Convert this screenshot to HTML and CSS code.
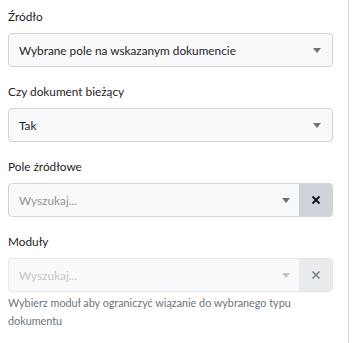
FILE: index.html
```html
<!DOCTYPE html>
<html lang="pl">
<head>
<meta charset="utf-8">
<link rel="stylesheet" href="styles.css">
</head>
<body>
<div class="panel">
  <div class="group">
    <div class="label">Źródło</div>
    <div class="select">
      <span class="value">Wybrane pole na wskazanym dokumencie</span>
      <span class="caret"></span>
    </div>
  </div>
  <div class="group">
    <div class="label">Czy dokument bieżący</div>
    <div class="select">
      <span class="value">Tak</span>
      <span class="caret"></span>
    </div>
  </div>
  <div class="group">
    <div class="label">Pole źródłowe</div>
    <div class="select with-clear">
      <span class="value placeholder">Wyszukaj...</span>
      <span class="caret"></span>
      <span class="clear">
        <svg width="10" height="10" viewBox="0 0 10 10"><path d="M1.5 1.5 L8.5 8.5 M8.5 1.5 L1.5 8.5" stroke="#111" stroke-width="1.8" fill="none"/></svg>
      </span>
    </div>
  </div>
  <div class="group">
    <div class="label">Moduły</div>
    <div class="select with-clear disabled">
      <span class="value placeholder">Wyszukaj...</span>
      <span class="caret"></span>
      <span class="clear">
        <svg width="10" height="10" viewBox="0 0 10 10"><path d="M1.5 1.5 L8.5 8.5 M8.5 1.5 L1.5 8.5" stroke="#7a8089" stroke-width="1.6" fill="none"/></svg>
      </span>
    </div>
    <div class="help">Wybierz moduł aby ograniczyć wiązanie do wybranego typu dokumentu</div>
  </div>
</div>
</body>
</html>
```

FILE: styles.css
```css
html, body {
  margin: 0;
  padding: 0;
  background: #fff;
}
body {
  font-family: "Lato", "Open Sans", sans-serif;
  color: #212529;
}
.panel {
  width: 325px;
  height: 336px;
  padding: 7px 15px 0 8px;
  border-right: 1px solid #d0d3d8;
}
.group {
  margin-bottom: 15px;
}
.label {
  font-size: 11.8px;
  line-height: 20px;
  margin-bottom: 6px;
  color: #1f2328;
}
.select {
  height: 32px;
  border: 1px solid #ced4da;
  border-radius: 4px;
  background: #f8f9fa;
  display: flex;
  align-items: center;
  padding-left: 10px;
  overflow: hidden;
}
.value {
  flex: 1;
  font-size: 11.8px;
  color: #1f2328;
}
.value.placeholder {
  color: #8e949a;
}
.caret {
  width: 0;
  height: 0;
  border-left: 4.5px solid transparent;
  border-right: 4.5px solid transparent;
  border-top: 5px solid #6c737a;
  margin-right: 11px;
}
.with-clear .caret {
  margin-right: 9px;
}
.clear {
  width: 33px;
  align-self: stretch;
  background: #ced2d9;
  display: flex;
  align-items: center;
  justify-content: center;
}
.disabled {
  background: #f8f9fa;
  border-color: #e4e7ea;
}
.disabled .value.placeholder {
  color: #c3c7cb;
}
.disabled .caret {
  border-top-color: #c3c7cb;
}
.disabled .clear {
  background: #e9ecef;
}
.help {
  font-size: 10.8px;
  line-height: 18px;
  color: #6c757d;
  margin-top: 2px;
}
```
